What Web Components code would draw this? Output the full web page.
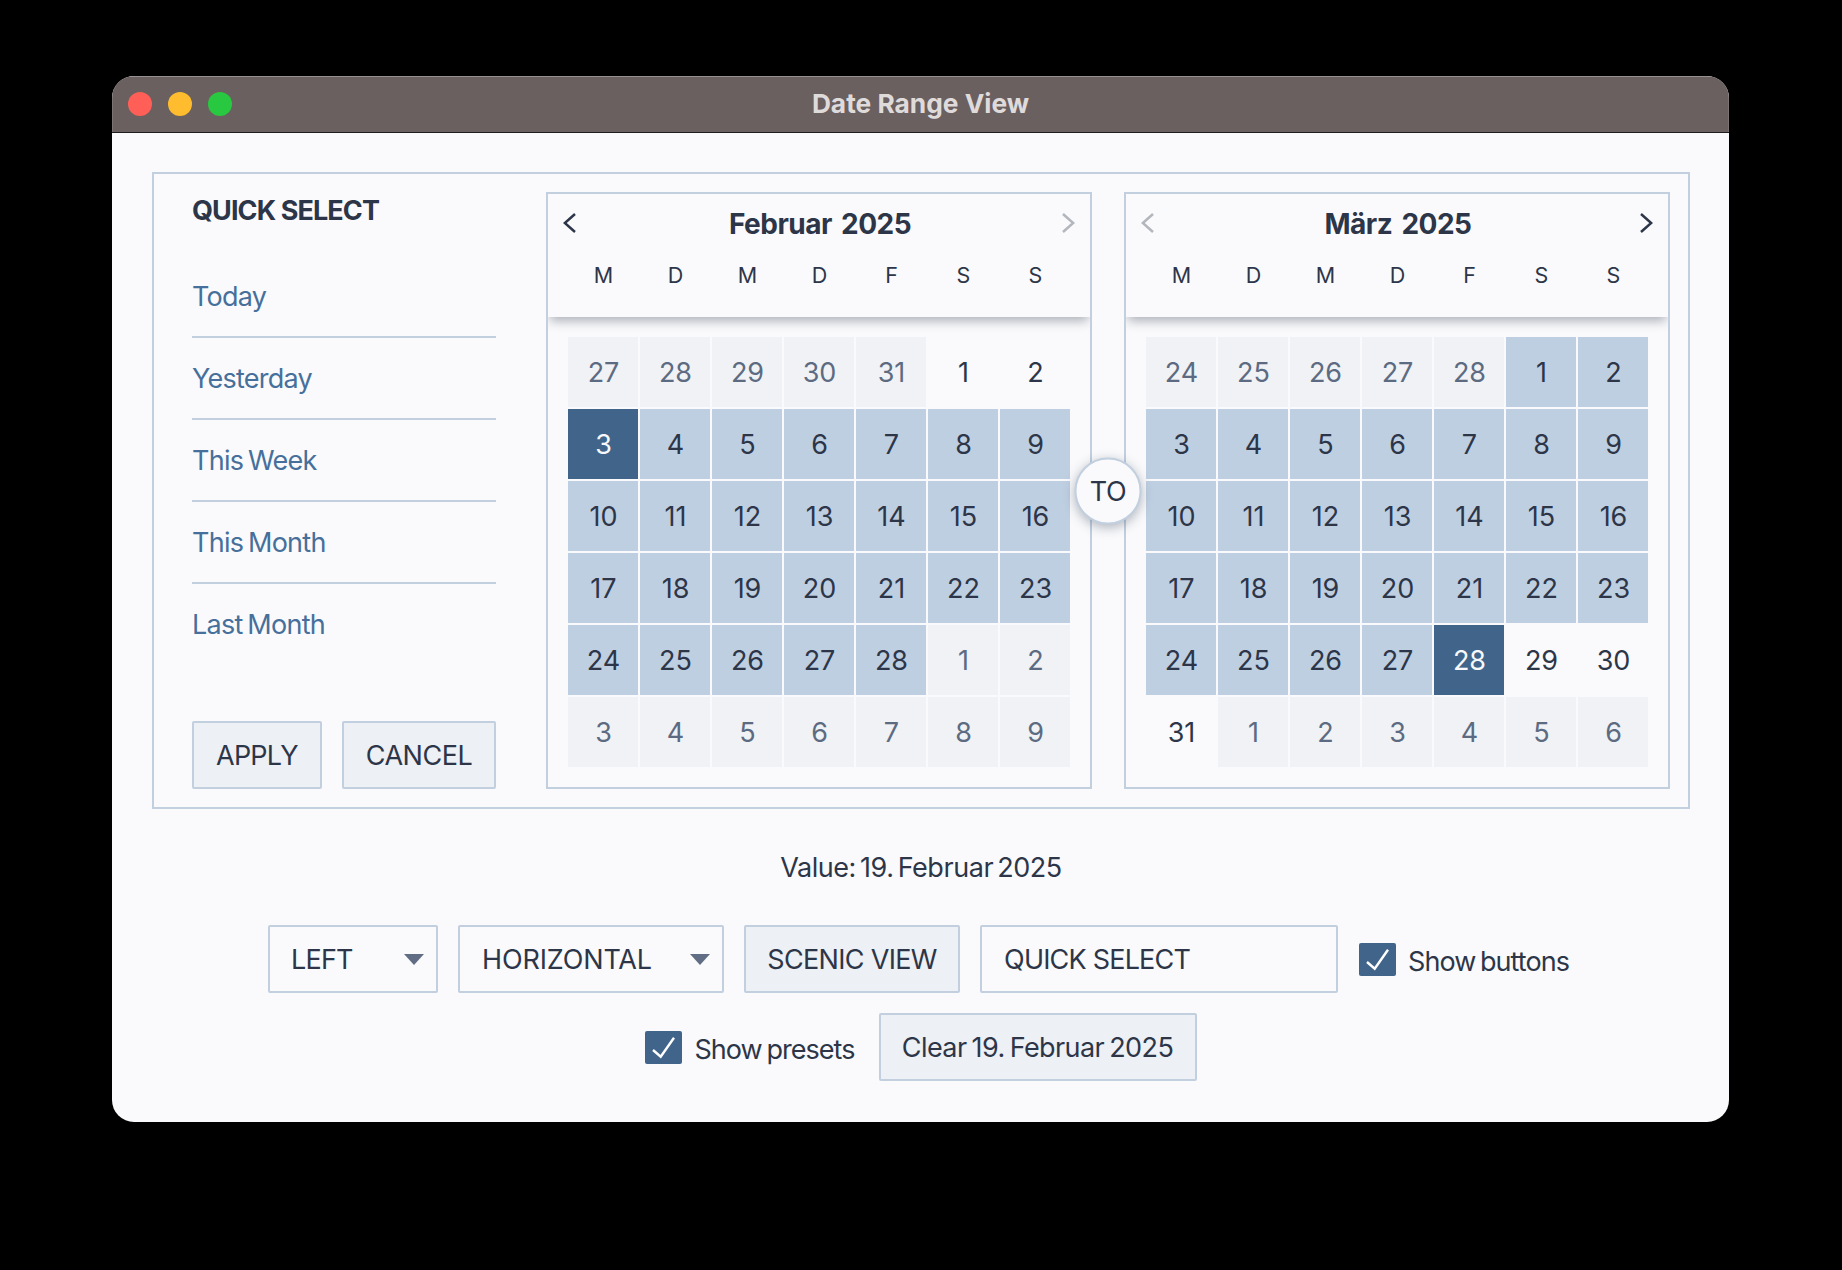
<!DOCTYPE html>
<html lang="de">
<head>
<meta charset="utf-8">
<title>Date Range View</title>
<style>
  html, body { margin: 0; background: #000; }
  body {
    padding: 76px 112px 148px;
    font-family: Inter, "Liberation Sans", sans-serif;
    font-weight: 380;
    color: #2d3648;
  }
</style>
</head>
<body>
<app-window heading="Date Range View">
  <range-picker>
    <quick-select slot="presets"></quick-select>
    <month-calendar slot="from" title-text="Februar 2025" prev-active
      days="27o 28o 29o 30o 31o 1n 2n 3s 4r 5r 6r 7r 8r 9r 10r 11r 12r 13r 14r 15r 16r 17r 18r 19r 20r 21r 22r 23r 24r 25r 26r 27r 28r 1o 2o 3o 4o 5o 6o 7o 8o 9o"></month-calendar>
    <month-calendar slot="to" title-text="März 2025" next-active
      days="24o 25o 26o 27o 28o 1r 2r 3r 4r 5r 6r 7r 8r 9r 10r 11r 12r 13r 14r 15r 16r 17r 18r 19r 20r 21r 22r 23r 24r 25r 26r 27r 28s 29n 30n 31n 1o 2o 3o 4o 5o 6o"></month-calendar>
  </range-picker>
  <value-label>Value: 19. Februar 2025</value-label>
  <control-row>
    <combo-box style="width:170px;--ls:-0.8px;--pl:21px">LEFT</combo-box>
    <combo-box style="width:266px;--ls:-0.15px">HORIZONTAL</combo-box>
    <flat-button style="width:216px;--ls:-0.68px">SCENIC VIEW</flat-button>
    <text-field style="width:358px;--ls:-0.8px">QUICK SELECT</text-field>
    <check-box style="margin-left:1px;margin-right:5px">Show buttons</check-box>
  </control-row>
  <control-row style="gap:24px">
    <check-box>Show presets</check-box>
    <flat-button style="width:318px;--ls:-0.58px;--ws:-2px">Clear 19. Februar 2025</flat-button>
  </control-row>
</app-window>

<script>
'use strict';

const BORDER = '#c1cfdf';

class AppWindow extends HTMLElement {
  constructor() {
    super();
    this.attachShadow({ mode: 'open' });
    this.shadowRoot.innerHTML = `
      <style>
        :host {
          display: block;
          width: 1617px;
          height: 1046px;
          box-sizing: border-box;
          background: #fafafc;
          border-radius: 22px;
          overflow: hidden;
        }
        .bar {
          padding-bottom: 2px;
          height: 54px;
          display: flex;
          align-items: center;
          position: relative;
          justify-content: center;
          background: #6a6060;
          border-bottom: 1px solid #1d1d1d;
          box-shadow: inset 0 1px 0 rgba(255,255,255,.3),
            inset 1px 0 0 rgba(255,255,255,.12),
            inset -1px 0 0 rgba(255,255,255,.12);
          color: #e0dbdb;
          font: 700 26.3px Inter, "Liberation Sans", sans-serif;
        }
        .lights {
          position: absolute;
          left: 16px;
          top: 16px;
          display: flex;
          gap: 16px;
        }
        .lights i { width: 24px; height: 24px; border-radius: 50%; }
        .body { padding: 39px 39px 41px 40px; }
      </style>
      <div class="bar">
        <div class="lights">
          <i style="background:#ff5f57"></i>
          <i style="background:#febc2e"></i>
          <i style="background:#28c840"></i>
        </div>
        <span id="heading"></span>
      </div>
      <div class="body"><slot></slot></div>
    `;
    this.shadowRoot.getElementById('heading').textContent = this.getAttribute('heading');
  }
}

class RangePicker extends HTMLElement {
  constructor() {
    super();
    this.attachShadow({ mode: 'open' });
    this.shadowRoot.innerHTML = `
      <style>
        :host {
          display: flex;
          box-sizing: border-box;
          width: 1538px;
          height: 637px;
          padding: 18px;
          padding-left: 38px;
          gap: 50px;
          border: 2px solid ${BORDER};
        }
        .months { position: relative; display: flex; gap: 32px; }
        .to {
          position: absolute;
          left: 50%;
          top: 50%;
          width: 67px;
          height: 67px;
          box-sizing: border-box;
          transform: translate(-50%, -50%);
          display: flex;
          align-items: center;
          justify-content: center;
          background: #fafafc;
          border: 2px solid ${BORDER};
          border-radius: 50%;
          box-shadow: 0 3px 12px rgba(30,45,70,.35);
          font-size: 27px;
          letter-spacing: -0.3px;
        }
      </style>
      <slot name="presets"></slot>
      <div class="months">
        <slot name="from"></slot>
        <slot name="to"></slot>
        <div class="to">TO</div>
      </div>
    `;
  }
}

class QuickSelect extends HTMLElement {
  constructor() {
    super();
    this.attachShadow({ mode: 'open' });
    const presets = ['Today', 'Yesterday', 'This Week', 'This Month', 'Last Month'];
    this.shadowRoot.innerHTML = `
      <style>
        :host {
          display: flex;
          flex-direction: column;
          width: 304px;
        }
        h2 {
          margin: 0 0 28px;
          height: 36px;
          line-height: 37px;
          font-size: 27px;
          font-weight: 700;
          letter-spacing: -0.9px;
          color: #2d3648;
        }
        .item {
          box-sizing: border-box;
          height: 82px;
          display: flex;
          align-items: center;
          font-size: 27px;
          letter-spacing: -0.75px;
          word-spacing: -2px;
          color: #46709b;
          border-bottom: 2px solid ${BORDER};
        }
        .item.last { border-bottom: 0; padding-bottom: 2px; }
        .actions { margin-top: auto; display: flex; justify-content: space-between; }
      </style>
      <h2>QUICK SELECT</h2>
      ${presets.map((p, i) => `<div class="item ${i === presets.length - 1 ? 'last' : ''}">${p}</div>`).join('')}
      <div class="actions">
        <flat-button style="width:130px;--ls:-0.8px">APPLY</flat-button>
        <flat-button style="width:154px;--ls:-0.45px">CANCEL</flat-button>
      </div>
    `;
  }
}

class MonthCalendar extends HTMLElement {
  constructor() {
    super();
    this.attachShadow({ mode: 'open' });
    const cells = this.getAttribute('days').split(' ').map((d) => {
      const kind = d.slice(-1);
      return `<div class="cell ${kind}">${d.slice(0, -1)}</div>`;
    });
    const weekdays = ['M', 'D', 'M', 'D', 'F', 'S', 'S'];
    const prev = this.hasAttribute('prev-active') ? '#2d3648' : '#b2b6bd';
    const next = this.hasAttribute('next-active') ? '#2d3648' : '#b2b6bd';
    this.shadowRoot.innerHTML = `
      <style>
        :host {
          display: block;
          box-sizing: border-box;
          width: 546px;
          height: 597px;
          border: 2px solid ${BORDER};
          overflow: hidden;
        }
        header {
          position: relative;
          height: 123px;
          box-sizing: border-box;
          padding: 0 20px;
          background: #fafafc;
          box-shadow: 0 6px 10px -2px rgba(30,40,60,.35);
        }
        .top {
          height: 58px;
          margin: 0 -5px;
          display: flex;
          align-items: center;
          justify-content: space-between;
          font-size: 28px;
          font-weight: 700;
          letter-spacing: -0.5px;
          word-spacing: 3px;
        }
        .top span { position: relative; top: 1px; left: 1px; }
        svg { display: block; width: 13px; height: 20px; fill: none; stroke-width: 2.5; }
        .week {
          display: grid;
          grid-template-columns: repeat(7, 70px);
          gap: 2px;
          margin-top: 3px;
          font-size: 21.5px;
          line-height: 40px;
          text-align: center;
        }
        .week span { padding-left: 1px; }
        .grid {
          display: grid;
          grid-template-columns: repeat(7, 70px);
          grid-auto-rows: 70px;
          gap: 2px;
          padding: 20px;
        }
        .cell {
          display: flex;
          align-items: center;
          justify-content: center;
          box-sizing: border-box;
          padding-left: 1px;
          font-size: 27px;
        }
        .o { background: #f0f2f5; color: #5d6b82; }
        .r { background: #bfcfe2; }
        .s { background: #41658a; color: #f6f8fb; }
      </style>
      <header>
        <div class="top">
          <svg viewBox="0 0 13 20" style="stroke:${prev}"><path d="M12 1 1.8 10 12 19"/></svg>
          <span>${this.getAttribute('title-text')}</span>
          <svg viewBox="0 0 13 20" style="stroke:${next}"><path d="M1 1l10.2 9L1 19"/></svg>
        </div>
        <div class="week">${weekdays.map((w) => `<span>${w}</span>`).join('')}</div>
      </header>
      <div class="grid">${cells.join('')}</div>
    `;
  }
}

class FlatButton extends HTMLElement {
  constructor() {
    super();
    this.attachShadow({ mode: 'open' });
    this.shadowRoot.innerHTML = `
      <style>
        :host {
          display: flex;
          box-sizing: border-box;
          height: 68px;
          align-items: center;
          justify-content: center;
          background: #edf0f5;
          border: 2px solid ${BORDER};
          border-radius: 2px;
          font-size: 27px;
          letter-spacing: var(--ls, -0.5px);
          word-spacing: var(--ws, 0);
        }
      </style>
      <slot></slot>
    `;
  }
}

class ComboBox extends HTMLElement {
  constructor() {
    super();
    this.attachShadow({ mode: 'open' });
    this.shadowRoot.innerHTML = `
      <style>
        :host {
          display: flex;
          box-sizing: border-box;
          height: 68px;
          padding: 0 12px 0 var(--pl, 22px);
          align-items: center;
          justify-content: space-between;
          border: 2px solid ${BORDER};
          border-radius: 2px;
          font-size: 27px;
          letter-spacing: var(--ls, -0.5px);
        }
        i {
          width: 0;
          height: 0;
          border-left: 10px solid transparent;
          border-right: 10px solid transparent;
          border-top: 11px solid #616d84;
        }
      </style>
      <span><slot></slot></span><i></i>
    `;
  }
}

class TextField extends HTMLElement {
  constructor() {
    super();
    this.attachShadow({ mode: 'open' });
    this.shadowRoot.innerHTML = `
      <style>
        :host {
          display: flex;
          box-sizing: border-box;
          height: 68px;
          padding: 0 22px;
          align-items: center;
          border: 2px solid ${BORDER};
          border-radius: 2px;
          font-size: 27px;
          letter-spacing: var(--ls, -0.5px);
        }
      </style>
      <slot></slot>
    `;
  }
}

class CheckBox extends HTMLElement {
  constructor() {
    super();
    this.attachShadow({ mode: 'open' });
    this.shadowRoot.innerHTML = `
      <style>
        :host {
          display: flex;
          align-items: center;
          gap: 12px;
          font-size: 27px;
          letter-spacing: -0.95px;
          word-spacing: -2px;
        }
        svg { display: block; width: 37px; height: 33px; }
        span { position: relative; top: 2px; }
      </style>
      <svg viewBox="0 0 37 33">
        <rect width="37" height="33" rx="2" fill="#41658a"/>
        <path d="M8 19l7.7 6.7L29 6.7" fill="none" stroke="#fff" stroke-width="2.4"/>
      </svg>
      <span><slot></slot></span>
    `;
  }
}

class ValueLabel extends HTMLElement {
  constructor() {
    super();
    this.attachShadow({ mode: 'open' });
    this.shadowRoot.innerHTML = `
      <style>
        :host {
          display: block;
          margin: 40px 0;
          line-height: 38px;
          height: 36px;
          text-align: center;
          font-size: 27px;
          letter-spacing: -0.45px;
          word-spacing: -3px;
        }
      </style>
      <slot></slot>
    `;
  }
}

class ControlRow extends HTMLElement {
  constructor() {
    super();
    this.attachShadow({ mode: 'open' });
    this.shadowRoot.innerHTML = `
      <style>
        :host {
          display: flex;
          justify-content: center;
          align-items: center;
          gap: 20px;
          margin-bottom: 20px;
        }
      </style>
      <slot></slot>
    `;
  }
}

customElements.define('app-window', AppWindow);
customElements.define('range-picker', RangePicker);
customElements.define('quick-select', QuickSelect);
customElements.define('month-calendar', MonthCalendar);
customElements.define('flat-button', FlatButton);
customElements.define('combo-box', ComboBox);
customElements.define('text-field', TextField);
customElements.define('check-box', CheckBox);
customElements.define('value-label', ValueLabel);
customElements.define('control-row', ControlRow);
</script>
</body>
</html>
